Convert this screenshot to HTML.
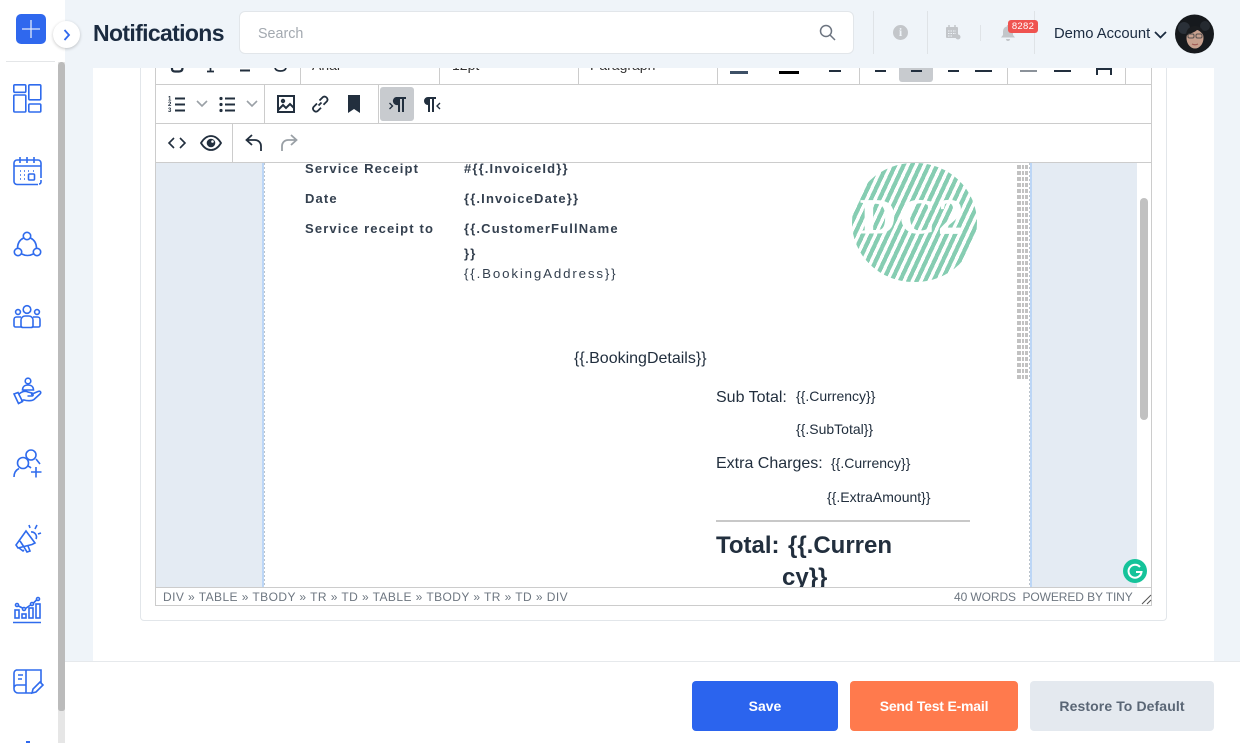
<!DOCTYPE html>
<html><head><meta charset="utf-8"><style>
*{box-sizing:border-box}
html,body{margin:0;padding:0;width:1240px;height:743px;overflow:hidden;background:#eff4f9;font-family:"Liberation Sans",sans-serif}
.a{position:absolute}
.t{position:absolute;white-space:nowrap}
.b{font-weight:bold;color:#34404f;font-size:13px;letter-spacing:1.15px}
svg{position:absolute;overflow:visible}
.i path,.i circle,.i rect{fill:none;stroke:#2f6bed;stroke-width:1.6}
.k path,.k rect,.k circle{fill:none;stroke:#222f3e;stroke-width:2}
.v{position:absolute;background:#ccc;width:1px}
.d{position:absolute;background:#222f3e}
</style></head><body>
<div class="a" style="left:93px;top:60px;width:1121px;height:601px;background:#fff"></div>
<div class="a" style="left:140px;top:40px;width:1027px;height:581px;border:1px solid #e2e6ea;border-radius:4px;background:#fff"></div>

<!-- editor -->
<div class="a" style="left:155px;top:40px;width:997px;height:566px;border:1px solid #ccc;background:#fff"></div>
<div class="a" style="left:156px;top:84px;width:995px;height:1px;background:#ccc"></div>
<div class="a" style="left:156px;top:123px;width:995px;height:1px;background:#ccc"></div>
<div class="a" style="left:156px;top:162px;width:995px;height:1px;background:#ccc"></div>
<div class="v" style="left:300px;top:50px;height:34px"></div>
<div class="v" style="left:439px;top:50px;height:34px"></div>
<div class="v" style="left:578px;top:50px;height:34px"></div>
<div class="v" style="left:717px;top:50px;height:34px"></div>
<div class="v" style="left:859px;top:50px;height:34px"></div>
<div class="v" style="left:1007px;top:50px;height:34px"></div>
<div class="v" style="left:1125px;top:50px;height:34px"></div>
<div class="v" style="left:264px;top:85px;height:38px"></div>
<div class="v" style="left:378px;top:85px;height:38px"></div>
<div class="v" style="left:232px;top:124px;height:38px"></div>

<!-- row 1 remnants -->
<svg style="left:170px;top:68px" width="120" height="6" fill="none" stroke="#222f3e" stroke-width="2.200"><path d="M2 0v1q0 2.500 3 2.500h4q3.500 0 3.500-3.500"/><path d="M37 3.500h7M40.500 0v3.500" stroke-width="1.700"/><path d="M70 2.500h10" stroke-width="2"/><path d="M105 0q1 3 5.500 3T116 0" stroke-width="1.800"/></svg>
<div class="t" style="left:312px;top:57px;font-size:14px;color:#333">Arial</div>
<div class="t" style="left:452px;top:57px;font-size:14px;color:#333">12pt</div>
<div class="t" style="left:590px;top:57px;font-size:14px;color:#333">Paragraph</div>
<div class="d" style="left:730px;top:71px;width:18px;height:3px;background:#3d5066"></div>
<div class="d" style="left:779px;top:71px;width:20px;height:3px;background:#000"></div>
<div class="d" style="left:829px;top:70px;width:12px;height:2px"></div>
<div class="a" style="left:899px;top:68px;width:34px;height:14px;background:#c8cbcf;border-radius:0 0 3px 3px"></div>
<div class="d" style="left:875px;top:70px;width:11px;height:2px"></div>
<div class="d" style="left:911px;top:70px;width:11px;height:2px"></div>
<div class="d" style="left:948px;top:70px;width:11px;height:2px"></div>
<div class="d" style="left:975px;top:70px;width:17px;height:2px"></div>
<div class="d" style="left:1020px;top:70px;width:17px;height:2px;background:#8b929a"></div>
<div class="d" style="left:1054px;top:70px;width:17px;height:2px"></div>
<div class="a" style="left:1096px;top:68px;width:16px;height:7px;border:2px solid #222f3e;border-bottom:0"></div>

<!-- row 2 -->
<svg style="left:167px;top:95px" width="20" height="18"><text x="1" y="5.500" font-size="6" fill="#222f3e" font-weight="bold">1</text><text x="1" y="11" font-size="6" fill="#222f3e" font-weight="bold">2</text><text x="1" y="17" font-size="6" fill="#222f3e" font-weight="bold">3</text><path d="M8 3.500h10M8 9.500h10M8 15.500h10" stroke="#222f3e" stroke-width="2"/></svg>
<svg style="left:196px;top:100px" width="12" height="8"><path d="M1 1l5 5 5-5" fill="none" stroke="#9aa0a6" stroke-width="1.600"/></svg>
<svg style="left:219px;top:95px" width="18" height="18"><circle cx="2" cy="3.500" r="1.600" fill="#222f3e"/><circle cx="2" cy="9.500" r="1.600" fill="#222f3e"/><circle cx="2" cy="15.500" r="1.600" fill="#222f3e"/><path d="M6 3.500h10M6 9.500h10M6 15.500h10" stroke="#222f3e" stroke-width="2"/></svg>
<svg style="left:246px;top:100px" width="12" height="8"><path d="M1 1l5 5 5-5" fill="none" stroke="#9aa0a6" stroke-width="1.600"/></svg>
<svg class="k" style="left:277px;top:95px" width="18" height="18"><rect x="1" y="1" width="16" height="16"/><circle cx="6" cy="6" r="1.200"/><path d="M1 15l5-5 3 3 4-4 4 4" stroke-width="1.600"/></svg>
<svg style="left:310px;top:94px" width="20" height="20" fill="none" stroke="#222f3e" stroke-width="1.800"><path d="M8.500 11.500l3-3M7 9.500l-3.500 3.500a3 3 0 0 0 4 4.200L11 13.700M9.500 6.500L13 3a3 3 0 0 1 4 4.200L13.500 10.700"/></svg>
<svg style="left:348px;top:95px" width="12" height="18"><path d="M0 0h12v18l-6-4-6 4z" fill="#222f3e"/></svg>
<div class="a" style="left:380px;top:87px;width:34px;height:34px;background:#c8cbcf;border-radius:3px"></div>
<svg style="left:389px;top:96px" width="18" height="16"><path d="M7 1h10v2h-2v13h-2V3h-2v13H9V9a4 4 0 0 1-2-8z" fill="#222f3e"/><path d="M.500 7l3 3-3 3" fill="none" stroke="#222f3e" stroke-width="1.400"/></svg>
<svg style="left:423px;top:96px" width="18" height="16"><path d="M1 5a4 4 0 0 1 4-4h8v2h-2v13H9V3H7v13H5V9a4 4 0 0 1-4-4z" fill="#222f3e"/><path d="M17 7l-3 3 3 3" fill="none" stroke="#222f3e" stroke-width="1.400"/></svg>

<!-- row 3 -->
<svg style="left:168px;top:137px" width="18" height="12" fill="none" stroke="#222f3e" stroke-width="1.600"><path d="M6 1L1 6l5 5M12 1l5 5-5 5"/></svg>
<svg style="left:200px;top:135px" width="22" height="16"><path d="M1 8C4 3 7 1 11 1s7 2 10 7c-3 5-6 7-10 7S4 13 1 8z" fill="none" stroke="#222f3e" stroke-width="1.800"/><circle cx="11" cy="8" r="4.300" fill="#222f3e"/><circle cx="12.500" cy="6.500" r="1.300" fill="#fff"/></svg>
<svg style="left:245px;top:134px" width="18" height="18" fill="none" stroke="#222f3e" stroke-width="1.800"><path d="M7 1L1.500 6 7 11M2 6h8a6 6 0 0 1 6 6v5"/></svg>
<svg style="left:280px;top:134px" width="18" height="18" fill="none" stroke="#9aa0a6" stroke-width="1.800"><path d="M11 1l5.500 5L11 11M16 6H8a6 6 0 0 0-6 6v5"/></svg>

<!-- content -->
<div class="a" style="left:156px;top:163px;width:981px;height:424px;background:#e4ebf3;overflow:hidden"></div>
<div class="a" style="left:1137px;top:163px;width:14px;height:424px;background:#fff"></div>
<div class="a" style="left:1140px;top:198px;width:8px;height:222px;background:#c1c1c1;border-radius:4px"></div>
<div class="a" style="left:262px;top:163px;width:770px;height:424px;background:#fff;border-left:2px solid #bcd6f6;border-right:2px solid #bcd6f6"></div>
<div class="a" style="left:264px;top:163px;width:1px;height:424px;background:repeating-linear-gradient(#bcc4cc 0 2px,#fff 2px 4px)"></div>
<div class="a" style="left:1029px;top:163px;width:1px;height:424px;background:repeating-linear-gradient(#bcc4cc 0 2px,#fff 2px 4px)"></div>
<div class="a" style="left:1017px;top:165px;width:11px;height:216px;background:repeating-linear-gradient(#c2c2c2 0 4px,#fff 4px 6px),#c2c2c2"></div>
<div class="a" style="left:1021px;top:165px;width:1px;height:216px;background:#fff"></div>
<div class="a" style="left:1024px;top:165px;width:1px;height:216px;background:#fff"></div>
<div class="a" style="left:852px;top:163px;width:125px;height:119px;overflow:hidden;border-radius:62px/60px;background:repeating-linear-gradient(115deg,#86cdb2 0 4.200px,#fff 4.200px 7.600px)"></div>
<div class="t" style="left:860px;top:187px;font:bold 50px 'Liberation Serif',serif;color:#fff;letter-spacing:3px;-webkit-text-stroke:.8px #fff">DC2</div>

<div class="t b" style="left:305px;top:161px">Service Receipt</div>
<div class="t b" style="left:305px;top:191px">Date</div>
<div class="t b" style="left:305px;top:221px">Service receipt to</div>
<div class="t b" style="left:464px;top:161px">#{{.InvoiceId}}</div>
<div class="t b" style="left:464px;top:191px">{{.InvoiceDate}}</div>
<div class="t b" style="left:464px;top:221px">{{.CustomerFullName</div>
<div class="t b" style="left:464px;top:246px">}}</div>
<div class="t" style="left:464px;top:266px;font-size:13.300px;color:#34404f;letter-spacing:1.850px">{{.BookingAddress}}</div>
<div class="t" style="left:574px;top:350px;font-size:16px;color:#222f3e;letter-spacing:0">{{.BookingDetails}}</div>
<div class="t" style="left:716px;top:389px;font-size:16px;color:#222f3e">Sub Total:</div>
<div class="t" style="left:796px;top:388px;font-size:14px;color:#222f3e;letter-spacing:0">{{.Currency}}</div>
<div class="t" style="left:796px;top:421px;font-size:14px;color:#222f3e;letter-spacing:0">{{.SubTotal}}</div>
<div class="t" style="left:716px;top:455px;font-size:16px;color:#222f3e">Extra Charges:</div>
<div class="t" style="left:831px;top:455px;font-size:14px;color:#222f3e;letter-spacing:0">{{.Currency}}</div>
<div class="t" style="left:827px;top:489px;font-size:14px;color:#222f3e;letter-spacing:0">{{.ExtraAmount}}</div>
<div class="a" style="left:716px;top:520px;width:254px;height:2px;background:#c8c8c8"></div>
<div class="t" style="left:716px;top:532px;font:bold 24px 'Liberation Sans',sans-serif;color:#222f3e">Total:</div>
<div class="t" style="left:788px;top:532px;font:bold 24px 'Liberation Sans',sans-serif;color:#222f3e">{{.Curren</div>
<div class="t" style="left:782px;top:563px;font:bold 24px 'Liberation Sans',sans-serif;color:#222f3e;height:24px;overflow:hidden;line-height:30px">cy}}</div>
<div class="a" style="left:1123px;top:559px;width:24px;height:24px;border-radius:50%;background:#15c39a"></div>
<svg style="left:1123px;top:559px" width="24" height="24" fill="none" stroke="#fff" stroke-width="2"><path d="M17 8a6.500 6.500 0 1 0 1.500 5H13"/></svg>

<!-- status bar -->
<div class="a" style="left:156px;top:587px;width:995px;height:18px;background:#fff;border-top:1px solid #ccc"></div>
<div class="t" style="left:163px;top:590px;font-size:12px;color:#6d7680;letter-spacing:.43px">DIV » TABLE » TBODY » TR » TD » TABLE » TBODY » TR » TD » DIV</div>
<div class="t" style="left:954px;top:590px;font-size:12px;color:#6d7680;letter-spacing:-.09px">40 WORDS &nbsp;POWERED BY TINY</div>
<svg style="left:1141px;top:594px" width="11" height="11" stroke="#555" stroke-width="1"><path d="M1 10L10 1M6 10l4-4"/></svg>

<!-- header -->
<div class="a" style="left:65px;top:0;width:1175px;height:68px;background:#eff4f9"></div>
<div class="t" style="left:93px;top:20px;font-size:23px;font-weight:bold;color:#1b2b40;letter-spacing:-.65px">Notifications</div>
<div class="a" style="left:239px;top:11px;width:615px;height:43px;background:#fff;border:1px solid #e2e6ea;border-radius:6px"></div>
<div class="t" style="left:258px;top:26px;font-size:14.300px;color:#a3a9b0">Search</div>
<svg style="left:819px;top:24px" width="17" height="17" fill="none" stroke="#6c7480" stroke-width="1.500"><circle cx="7" cy="7" r="5.500"/><path d="M11 11l5 5"/></svg>
<div class="a" style="left:873px;top:11px;width:1px;height:43px;background:#dfe3e7"></div>
<div class="a" style="left:927px;top:11px;width:1px;height:43px;background:#dfe3e7"></div>
<div class="a" style="left:980px;top:25px;width:1px;height:16px;background:#dfe3e7"></div>
<div class="a" style="left:1034px;top:11px;width:1px;height:43px;background:#dfe3e7"></div>
<div class="a" style="left:893px;top:25px;width:15px;height:15px;border-radius:50%;background:#c3c6ca"></div>
<div class="t" style="left:893px;top:25px;width:15px;text-align:center;font:bold 12px/15px 'Liberation Serif',serif;color:#eff4f9">i</div>
<svg style="left:946px;top:25px" width="15" height="15"><rect x="0" y="2" width="12" height="11" rx="1" fill="#c3c6ca"/><path d="M3 0v3M9 0v3" stroke="#c3c6ca" stroke-width="1.500"/><path d="M2 6h8M2 8.500h8M2 11h5" stroke="#eff4f9" stroke-width="1" stroke-dasharray="1.500 1"/><circle cx="12" cy="12" r="2.500" fill="#c3c6ca"/></svg>
<svg style="left:1001px;top:25px" width="14" height="16"><path d="M7 0a1 1 0 0 1 1 1.500c3 .5 4 3 4 5.500v3l2 2.500H0L2 10V7c0-2.500 1-5 4-5.500A1 1 0 0 1 7 0zM5 14h4a2 2 0 0 1-4 0z" fill="#c3c6ca"/></svg>
<div class="a" style="left:1008px;top:20px;width:30px;height:13px;background:#ef5350;border-radius:3px;color:#fff;font-size:9.500px;line-height:13px;text-align:center;letter-spacing:.3px">8282</div>
<div class="t" style="left:1054px;top:26px;font-size:14.800px;color:#1b2b40">Demo Account</div>
<svg style="left:1154px;top:31px" width="13" height="8" fill="none" stroke="#1b2b40" stroke-width="1.800"><path d="M1 1l5.500 5.500L12 1"/></svg>
<svg style="left:1175px;top:14px" width="39" height="40">
<circle cx="19.500" cy="20" r="19.500" fill="#16191d"/>
<circle cx="9" cy="14" r="6" fill="#2a3038"/><circle cx="30" cy="12" r="5" fill="#252a30"/>
<ellipse cx="20" cy="24" rx="8.500" ry="10.500" fill="#c7a08e"/>
<path d="M11 22c0-7 4-10 9-10s9 3 9 10c-2-3-5-6-7-6-3 3-7 3-11 6z" fill="#1a1c1f"/>
<rect x="13" y="20" width="6" height="4" rx="1.500" fill="none" stroke="#55504e" stroke-width="1"/><rect x="21" y="20" width="6" height="4" rx="1.500" fill="none" stroke="#55504e" stroke-width="1"/>
<path d="M17 30q3 1.500 6 0" stroke="#a05a55" stroke-width="1.200" fill="none"/>
</svg>

<!-- sidebar -->
<div class="a" style="left:0;top:0;width:65px;height:743px;background:#fff"></div>
<div class="a" style="left:58px;top:62px;width:7px;height:681px;background:#e6e6e6"></div>
<div class="a" style="left:58px;top:62px;width:7px;height:649px;background:#bbb;border-radius:4px 4px 3px 3px"></div>
<div class="a" style="left:6px;top:61px;width:49px;height:1px;background:#e4e6e8"></div>
<div class="a" style="left:16px;top:14px;width:30px;height:30px;background:#2f68ee;border-radius:5px"></div>
<svg style="left:21px;top:19px" width="20" height="20" stroke="#dfe8fb" stroke-width="1.300"><path d="M10 1v18M1 10h18"/></svg>
<div class="a" style="left:53px;top:21px;width:27px;height:27px;border-radius:50%;background:#fff;box-shadow:0 1px 3px rgba(0,0,0,.22)"></div>
<svg style="left:63px;top:29px" width="8" height="12" fill="none" stroke="#2f68ee" stroke-width="1.800"><path d="M1.500 1l4.500 5-4.500 5"/></svg>

<svg class="i" style="left:13px;top:84px" width="29" height="29"><rect x=".8" y=".8" width="12" height="7.500" rx="1"/><rect x=".8" y="11" width="12" height="17" rx="1"/><rect x="15.800" y=".8" width="12" height="15" rx="1"/><rect x="15.800" y="20" width="12" height="8" rx="1"/></svg>
<svg class="i" style="left:13px;top:157px" width="29" height="29"><path d="M25 27.500H4a3 3 0 0 1-3-3V6a3 3 0 0 1 3-3h21a3 3 0 0 1 3 3v15M1 9h27M7 0v6M14 0v6M21 0v6"/><path d="M7 14h1M11 14h1M15 14h1M20 14h1M7 18h1M11 18h1M7 22h1M11 22h1" stroke-width="2"/><rect x="15.500" y="17" width="6" height="6" rx="1" stroke-width="2"/><path d="M28 23v2a2 2 0 0 1-2 2"/></svg>
<svg class="i" style="left:13px;top:231px" width="29" height="29"><circle cx="14" cy="5" r="3.700"/><circle cx="5" cy="21" r="3.700"/><circle cx="24" cy="21" r="3.700"/><path d="M10.500 7C6.500 9 4.500 13 4.500 17.300M17.500 7c4 2 6 6 6 10.300M8.800 23q5.700 3 11.400 0"/></svg>
<svg class="i" style="left:13px;top:305px" width="29" height="26"><circle cx="14" cy="4.500" r="3.800"/><circle cx="5" cy="7" r="2.400"/><circle cx="24" cy="7" r="2.400"/><path d="M8 21V15a4 4 0 0 1 4-4h4a4 4 0 0 1 4 4v6a2 2 0 0 1-2 1.500h-8A2 2 0 0 1 8 21zM8 12H3.500A2.500 2.500 0 0 0 1 14.500v6A1.500 1.500 0 0 0 2.500 22H8M20 12h4.500a2.500 2.500 0 0 1 2.500 2.500v6a1.500 1.500 0 0 1-1.500 1.500H20"/></svg>
<svg class="i" style="left:13px;top:376px" width="29" height="30"><circle cx="15" cy="5" r="2.800"/><path d="M9.500 14c0-3.500 2.500-5 5.500-5s5.500 1.500 5.500 5zM6 18c3-2.500 6-3.500 9-2l4 1c2 .5 1.500 3-.5 3h-4M18 18.500l7-3c2.500-1 3.500 1 2 2.500l-6 5.500c-2 1.500-7 1.500-10 .5l-3 .5M1 18l4-1.500 4.500 9-4 2z"/></svg>
<svg class="i" style="left:13px;top:449px" width="30" height="31"><circle cx="18" cy="6" r="5" stroke-width="2"/><circle cx="10" cy="14" r="5.500" stroke-width="2"/><path d="M1 28c0-4 2-7 5-8.500M15 17c1 .5 2 1 3 2M23 10l4 5" stroke-width="2"/><path d="M18 23h10.500M23 18v10.500" stroke-width="2.200"/></svg>
<svg class="i" style="left:15px;top:523px" width="26" height="30"><path d="M11 8l9 12-3 1.500-14 3.500-2-3zM4 25l4 3 1-1M9 24l3 5 3-1-2-5M5 18l4 6M21 16a5 5 0 0 0-5-7"/><path d="M15 5l-1-3M20 6l2-4M23 11l3-1" stroke-width="1.400"/></svg>
<svg class="i" style="left:13px;top:596px" width="29" height="29"><rect x="2" y="14" width="4" height="8"/><rect x="9" y="18" width="4" height="4"/><rect x="16" y="12" width="4" height="10"/><rect x="23" y="8" width="4" height="14"/><circle cx="4" cy="9" r="1.500"/><circle cx="11" cy="13" r="1.500"/><circle cx="19" cy="8" r="1.500"/><circle cx="25" cy="3" r="1.500"/><path d="M5.500 10l4 2M12.500 12.500l5-3.500M20.500 7l3-3"/><path d="M0 26.500h28" stroke-width="2"/></svg>
<svg class="i" style="left:13px;top:669px" width="30" height="28"><path d="M3 1h25v13M13 1v23M13 24H5a4 4 0 0 1-4-4V4a3 3 0 0 1 3-3M1 19a3 3 0 0 1 3-3h9M13 24h6" stroke-width="1.800"/><path d="M5 6h5M5 10h4"/><path d="M20 24l1-4 7-7 3 3-7 7z" transform="translate(-1 0)"/></svg>
<div class="a" style="left:26px;top:741px;width:4px;height:2px;background:#2f68ee"></div>

<!-- footer -->
<div class="a" style="left:65px;top:661px;width:1175px;height:82px;background:#fff;border-top:1px solid #e6e9ec"></div>
<div class="a" style="left:692px;top:681px;width:146px;height:50px;background:#2b64ee;border-radius:4px;color:#fff;font-weight:bold;font-size:14px;line-height:50px;text-align:center">Save</div>
<div class="a" style="left:850px;top:681px;width:168px;height:50px;background:#ff7a4d;border-radius:4px;color:#fff;font-weight:bold;font-size:14px;line-height:50px;text-align:center;letter-spacing:-.2px">Send Test E-mail</div>
<div class="a" style="left:1030px;top:681px;width:184px;height:50px;background:#e4e9ef;border-radius:4px;color:#5a6675;font-weight:bold;font-size:14px;line-height:50px;text-align:center;letter-spacing:.1px">Restore To Default</div>
</body></html>
